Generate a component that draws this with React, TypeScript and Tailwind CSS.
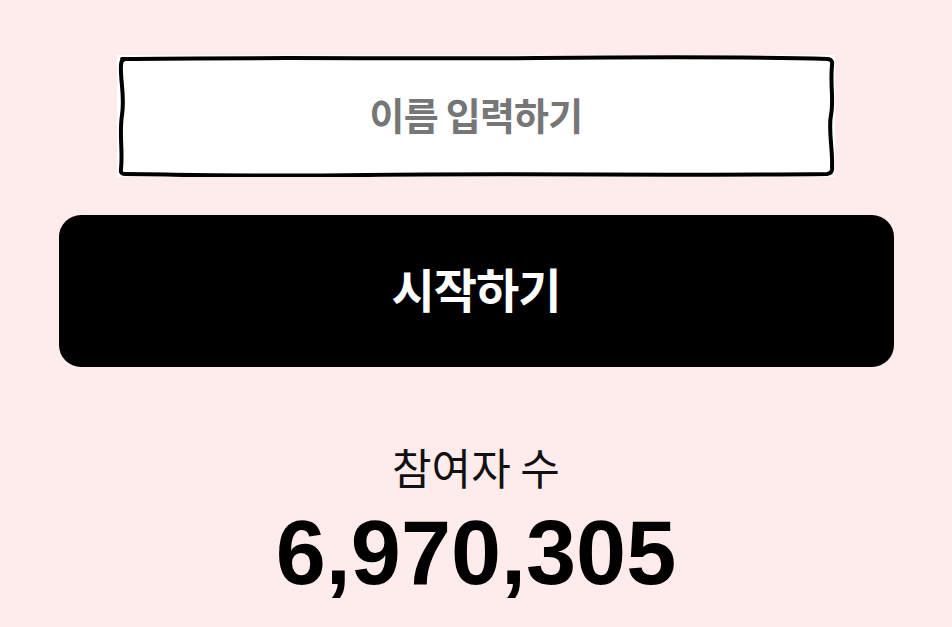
import React, { useState } from "react";

const korean = "font-['Noto_Sans_CJK_KR','Noto_Sans',sans-serif]";

// hand-drawn frame around the name field
const SketchBorder = () => (
    <svg
        className="absolute inset-0 w-full h-full pointer-events-none"
        viewBox="0 0 718 122"
        preserveAspectRatio="none"
        fill="none"
    >
        <path
            d="M5,4 C120,2 300,4 420,3 S640,2 711,4 Q716,5 715,10 C713,30 717,45 714,60 S716,95 715,112 Q716,118 710,119 C560,121 400,118 250,120 S60,119 8,119 Q3,119 4,114 C6,95 2,80 5,60 S3,25 4,10 Q4,5 8,4 Z"
            stroke="#000"
            strokeWidth={4}
            strokeLinejoin="round"
            vectorEffect="non-scaling-stroke"
        />
    </svg>
);

const App = () => {
    const [name, setName] = useState("");
    const participants = 6970305;

    return (
        <div className="min-h-[627px] w-full bg-[#feecec] flex flex-col items-center">
            <div className="relative mt-[55px] w-[718px] h-[122px] bg-white">
                <input
                    value={name}
                    onChange={(e) => setName(e.target.value)}
                    placeholder="이름 입력하기"
                    className={`w-full h-full pb-[6px] bg-transparent text-center text-[38px] font-bold tracking-[-0.02em] text-[#333] placeholder:text-[#767676] outline-none ${korean}`}
                />
                <SketchBorder />
            </div>

            <button
                type="button"
                className={`mt-[38px] w-[835px] h-[152px] pb-[6px] rounded-[22px] bg-black text-white text-[47px] font-bold tracking-[-0.02em] ${korean}`}
            >
                시작하기
            </button>

            <div className={`mt-[78px] text-[43px] leading-none text-[#111] ${korean}`}>참여자 수</div>
            <div className="mt-[20px] text-[90px] leading-none font-bold text-black font-['Liberation_Sans',Arial,sans-serif]">
                {participants.toLocaleString("en-US")}
            </div>
        </div>
    );
};

export default App;
